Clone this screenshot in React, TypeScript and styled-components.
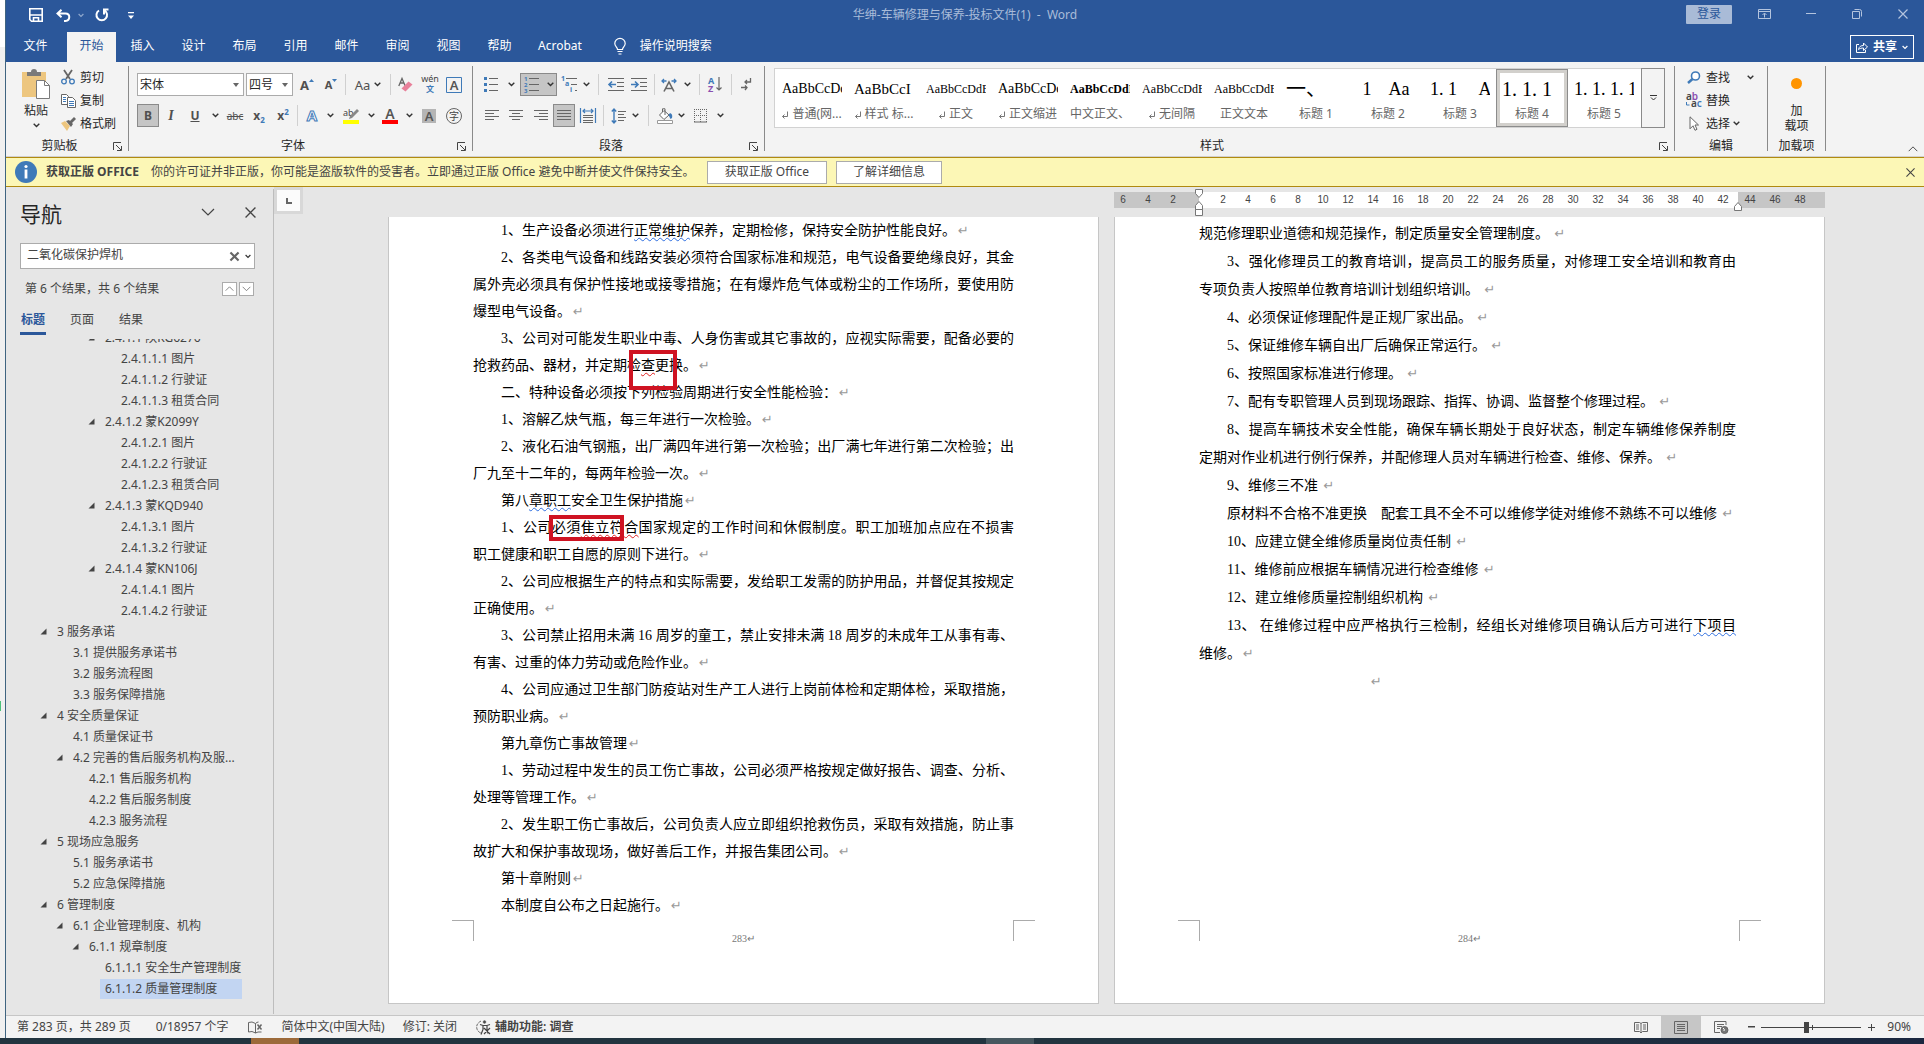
import React from "react";
import styled, { createGlobalStyle, css } from "styled-components";

const UI = `"Noto Sans", "Noto Sans CJK SC", sans-serif`;
const SERIF = `"Liberation Serif", "Noto Sans CJK SC", serif`;
const BLUE = "#2b579a";
const ACCENT = "#3f7ab8";

const Global = createGlobalStyle`
  * { box-sizing: border-box; }
  body { margin: 0; background: #f0f0f0; font-family: ${UI}; font-size: 12px; line-height: 16px; color: #262626; }
  button, input, select { font: inherit; color: inherit; margin: 0; padding: 0; border: 0; background: none; border-radius: 0; }
  svg { display: block; flex: none; overflow: visible; }
`;

/* ---------- frame ---------- */
const Desktop = styled.div`
  height: 100vh;
  display: flex;
  flex-direction: column;
`;
const Screen = styled.div`
  flex: 1;
  min-height: 0;
  display: flex;
`;
const Behind = styled.div`
  width: 5px;
  background: linear-gradient(#fff 0 47px, #f0f0f0 47px);
`;
const Spot = styled.div`
  width: 1px;
  height: 10px;
  margin-top: 701px;
  background: #4cc27a;
`;
const Win = styled.div`
  flex: 1;
  min-width: 0;
  display: flex;
  flex-direction: column;
  border-left: 1px solid #3f6480;
  background: #e6e6e6;
`;
const Taskbar = styled.div`
  height: 6px;
  display: flex;
  padding-left: 251px;
  background: linear-gradient(90deg, #22343f, #22343f 70%, #1b2740);
`;
const Segment = styled.div<{ $c: string }>`
  width: 48px;
  margin-right: 687px;
  background: ${(p) => p.$c};
`;

/* ---------- title bar ---------- */
const TitleBar = styled.header`
  height: 32px;
  display: grid;
  grid-template-columns: 1fr auto 1fr;
  background: ${BLUE};
  color: #fff;
`;
const Quick = styled.div`
  display: flex;
  align-items: center;
  padding: 0 0 2px 16px;
`;
const Title = styled.div`
  line-height: 30px;
  color: #a9bcd9;
  white-space: pre;
`;
const Caption = styled.div`
  display: flex;
  justify-content: flex-end;
  align-items: center;
  padding-bottom: 4px;
  color: #b4c4de;
`;
const SignIn = styled.button`
  width: 46px;
  height: 19px;
  margin-right: 6px;
  background: #a9bbd7;
  color: ${BLUE};
  border-radius: 1px;
`;
const Cell = styled.button<{ $w: number }>`
  width: ${(p) => p.$w}px;
  height: 22px;
  flex: none;
  display: flex;
  align-items: center;
  justify-content: center;
`;

/* ---------- tabs ---------- */
const TabBar = styled.nav`
  height: 30px;
  display: flex;
  gap: 2px;
  padding-left: 5px;
  background: ${BLUE};
  color: #fff;
`;
const Tab = styled.button<{ $on?: boolean; $first?: boolean }>`
  height: 30px;
  min-width: 49px;
  padding: 0 12px 2px;
  margin-right: ${(p) => (p.$first ? 5 : 0)}px;
  ${(p) => p.$on && css`background: #f3f3f3; color: ${BLUE};`}
`;
const Tell = styled.button`
  display: flex;
  align-items: center;
  gap: 14px;
  padding: 0 14px 2px 18px;
`;
const Share = styled.button`
  display: flex;
  align-items: center;
  justify-content: center;
  gap: 5px;
  width: 64px;
  height: 24px;
  margin: 3px 10px 0 auto;
  border: 1px solid #fff;
  font-weight: 700;
`;

/* ---------- ribbon ---------- */
const Ribbon = styled.div`
  height: 95px;
  display: flex;
  background: #f3f3f3;
  border-bottom: 1px solid #d2d0ce;
`;
const Group = styled.section<{ $w?: number }>`
  ${(p) => (p.$w ? `width: ${p.$w}px; flex: none;` : `flex: 1; min-width: 0;`)}
  display: flex;
  flex-direction: column;
  margin: 4px 0 5px;
  border-right: 1px solid #8a8a8a;
`;
const GroupBody = styled.div`
  flex: 1;
  min-height: 0;
  display: flex;
`;
const GroupFoot = styled.div`
  height: 18px;
  display: flex;
  align-items: center;
  margin-bottom: -4px;
`;
const GroupName = styled.span`
  flex: 1;
  text-align: center;
`;
const Launcher = styled.button`
  width: 15px;
  height: 10px;
`;
const Paste = styled.button`
  width: 46px;
  margin-left: 7px;
  padding-top: 3px;
  display: flex;
  flex-direction: column;
  align-items: center;
  gap: 4px;
`;
const Stack = styled.div<{ $l?: number }>`
  display: flex;
  flex-direction: column;
  padding-left: ${(p) => p.$l || 0}px;
`;
const Small = styled.button`
  height: 23px;
  display: flex;
  align-items: center;
  gap: 3px;
  white-space: nowrap;
`;
const IconBox = styled.span<{ $w?: number }>`
  width: ${(p) => p.$w || 18}px;
  display: flex;
  justify-content: center;
`;
const Rows = styled.div<{ $l: number }>`
  display: flex;
  flex-direction: column;
  gap: 8px;
  padding: 7px 0 0 ${(p) => p.$l}px;
`;
const Row = styled.div`
  height: 23px;
  display: flex;
  align-items: center;
`;
const Tool = styled.button<{ $w: number; $on?: boolean; $gap?: number }>`
  width: ${(p) => p.$w}px;
  height: 23px;
  flex: none;
  display: flex;
  align-items: center;
  justify-content: center;
  gap: ${(p) => p.$gap || 0}px;
  color: #505050;
  ${(p) => p.$on && css`background: #c5c5c5; border: 1px solid #8a8a8a;`}
`;
const Bar = styled.span<{ $w: number }>`
  width: ${(p) => p.$w}px;
  height: 21px;
  flex: none;
  background: linear-gradient(#d0d0d0, #d0d0d0) center / 1px 100% no-repeat;
`;
const Combo = styled.label<{ $w: number }>`
  width: ${(p) => p.$w}px;
  height: 23px;
  display: flex;
  align-items: center;
  margin-right: 2px;
  padding-right: 4px;
  background: #fff;
  border: 1px solid #ababab;
  select {
    flex: 1;
    min-width: 0;
    appearance: none;
    padding-left: 2px;
  }
`;
const Glyph = styled.span<{ $s?: number; $b?: boolean; $i?: boolean; $u?: boolean; $x?: boolean }>`
  font-size: ${(p) => p.$s || 14}px;
  font-weight: ${(p) => (p.$b ? 700 : 400)};
  font-style: ${(p) => (p.$i ? "italic" : "normal")};
  font-family: ${(p) => (p.$i ? SERIF : UI)};
  text-decoration: ${(p) => (p.$u ? "underline" : p.$x ? "line-through" : "none")};
  line-height: 20px;
  sub, sup { font-size: 8px; line-height: 0; color: ${ACCENT}; }
`;

/* ---------- style gallery ---------- */
const Gallery = styled.div`
  flex: 1;
  min-width: 0;
  height: 60px;
  display: flex;
  justify-content: space-between;
  margin: 2px 9px 0;
  background: #fff;
  border: 1px solid #d2d2d2;
`;
const StyleList = styled.div`
  display: flex;
  min-width: 0;
  overflow: hidden;
  padding: 0 1px;
`;
const StyleItem = styled.button<{ $on?: boolean }>`
  width: 72px;
  height: 58px;
  flex: none;
  padding: 0 6px;
  display: flex;
  flex-direction: column;
  ${(p) => p.$on && css`box-shadow: inset 0 0 0 1px #8c8c8c, inset 0 0 0 4px #d2d0cc;`}
`;
const Preview = styled.span<{ $s: number; $b?: boolean }>`
  width: 100%;
  height: 38px;
  overflow: hidden;
  white-space: pre;
  text-align: left;
  font: ${(p) => (p.$b ? 700 : 400)} ${(p) => p.$s}px/40px ${SERIF};
  color: #000;
`;
const StyleName = styled.span`
  width: 100%;
  line-height: 14px;
  color: #666;
  white-space: nowrap;
  display: flex;
  justify-content: center;
  align-items: center;
  gap: 4px;
`;
const More = styled.button`
  width: 24px;
  flex: none;
  display: flex;
  align-items: center;
  justify-content: center;
  margin: -1px;
  border: 1px solid #8a8a8a;
  background: #f3f3f3;
`;
const AddIn = styled.button`
  width: 100%;
  display: flex;
  flex-direction: column;
  align-items: center;
  padding-top: 12px;
  line-height: 15px;
`;
const Dot = styled.span`
  width: 11px;
  height: 11px;
  margin-bottom: 14px;
  border-radius: 50%;
  background: #ff9400;
`;
const RibbonEnd = styled.div`
  width: 98px;
  display: flex;
  align-items: flex-end;
  justify-content: flex-end;
`;
const Collapse = styled.button`
  width: 22px;
  padding: 0 0 4px;
  display: flex;
  justify-content: center;
`;

/* ---------- message bar ---------- */
const Message = styled.div`
  height: 30px;
  display: flex;
  align-items: center;
  padding-left: 9px;
  background: #fcf7b6;
  border: solid #b08a10;
  border-width: 1px 0;
  color: #444;
  white-space: nowrap;
`;
const MsgTitle = styled.strong`
  margin: 0 12px 0 9px;
`;
const MsgButton = styled.button<{ $w: number }>`
  width: ${(p) => p.$w}px;
  height: 23px;
  margin-right: 9px;
  background: #fff;
  border: 1px solid #ababab;
`;
const MsgText = styled.span`
  width: 556px;
`;

/* ---------- navigation pane ---------- */
const Main = styled.div`
  flex: 1;
  min-height: 0;
  display: flex;
`;
const Pane = styled.aside`
  width: 268px;
  flex: none;
  display: flex;
  flex-direction: column;
  margin: 2px 0 1px;
  border-right: 1px solid #bdbdbd;
  color: #444;
`;
const PaneHead = styled.div`
  height: 54px;
  display: flex;
  align-items: center;
  padding: 0 2px 8px 14px;
`;
const PaneTitle = styled.h2`
  flex: 1;
  margin: 0;
  padding-top: 4px;
  font-size: 21px;
  line-height: 28px;
  font-weight: 400;
  color: #262626;
`;
const Search = styled.label`
  height: 26px;
  margin: 0 18px 0 14px;
  display: flex;
  align-items: center;
  background: #fff;
  border: 1px solid #ababab;
  input {
    flex: 1;
    min-width: 0;
    padding: 0 0 2px 6px;
    outline: 0;
  }
`;
const Found = styled.div`
  height: 40px;
  display: flex;
  align-items: center;
  gap: 2px;
  padding: 0 19px 0 19px;
  span { flex: 1; }
`;
const Step = styled.button`
  width: 15px;
  height: 14px;
  display: flex;
  align-items: center;
  justify-content: center;
  background: #fff;
  border: 1px solid #ababab;
`;
const PaneTabs = styled.div`
  height: 26px;
  display: flex;
  gap: 23px;
  padding-left: 14px;
`;
const PaneTab = styled.button<{ $on?: boolean }>`
  width: 26px;
  height: 26px;
  padding-bottom: 5px;
  ${(p) => p.$on && css`color: ${BLUE}; font-weight: 700; border-bottom: 3px solid ${BLUE}; padding-bottom: 2px;`}
`;
const TreeBox = styled.div`
  flex: 1;
  min-height: 0;
  overflow: hidden;
  display: flex;
  flex-direction: column;
  justify-content: flex-end;
  margin-top: 4px;
  padding-bottom: 15px;
`;
const Tree = styled.ul`
  margin: 0;
  padding: 0 31px 0 0;
  list-style: none;
`;
const Node = styled.li<{ $level: number }>`
  height: 21px;
  display: flex;
  align-items: center;
  padding-left: ${(p) => p.$level * 16 + 18}px;
`;
const Fold = styled.span`
  width: 12px;
  flex: none;
`;
const NodeLink = styled.a<{ $on?: boolean }>`
  flex: 1;
  height: 20px;
  line-height: 20px;
  padding-left: 5px;
  color: #444;
  text-decoration: none;
  white-space: nowrap;
  ${(p) => p.$on && css`background: #c2d5f2;`}
`;

/* ---------- document ---------- */
const Canvas = styled.main`
  flex: 1;
  min-width: 0;
  display: flex;
  flex-direction: column;
`;
const RulerRow = styled.div`
  height: 30px;
  display: flex;
`;
const TabStop = styled.button`
  width: 29px;
  height: 27px;
  display: flex;
  align-items: center;
  justify-content: center;
  background: #fbfbfb;
  border: 3px solid #d8d8d8;
`;
const RulerSlot = styled.div`
  flex: 1;
  display: flex;
  justify-content: center;
  gap: 15px;
  padding: 5px 15px 0 0;
`;
const Blank = styled.div`
  width: 711px;
`;
const Ruler = styled.div`
  width: 711px;
  height: 16px;
  display: flex;
  font: 10px/16px "Liberation Sans", sans-serif;
  color: #444;
`;
const RulerPart = styled.div<{ $w?: number; $end?: boolean; $pad?: number }>`
  ${(p) => (p.$w ? `width: ${p.$w}px;` : "flex: 1;")}
  position: relative;
  display: flex;
  justify-content: ${(p) => (p.$end ? "flex-end" : "flex-start")};
  padding: ${(p) => (p.$end ? `0 ${p.$pad}px 0 0` : `0 0 0 ${p.$pad || 0}px`)};
  background: ${(p) => (p.$w ? "#c6c6c6" : "#fff")};
`;
const Tick = styled.span`
  width: 25px;
  flex: none;
  text-align: center;
`;
const Marker = styled.svg`
  position: absolute;
  left: -8px;
  top: -3px;
`;
const Sheets = styled.div`
  flex: 1;
  min-height: 0;
  display: flex;
  justify-content: center;
  gap: 15px;
  padding: 0 0 11px 15px;
`;
const Sheet = styled.article<{ $two?: boolean }>`
  width: 711px;
  display: flex;
  flex-direction: column;
  padding: ${(p) => (p.$two ? "3px 84px 0" : "0 84px")};
  background: #fff;
  border: 1px solid #c6c6c6;
  border-top: 0;
  font: 14px/27px ${SERIF};
  color: #000;
  ${(p) => p.$two && css`line-height: 28px;`}
`;
const Text = styled.div<{ $r?: number }>`
  flex: 1;
  padding-right: ${(p) => p.$r || 0}px;
`;
const Line = styled.p<{ $in?: boolean; $full?: boolean }>`
  margin: 0;
  padding-left: ${(p) => (p.$in ? 28 : 0)}px;
  white-space: ${(p) => (p.$full ? "nowrap" : "pre")};
  text-align: ${(p) => (p.$full ? "justify" : "left")};
  text-align-last: ${(p) => (p.$full ? "justify" : "left")};
`;
const Centered = styled(Line)`
  padding-left: 170px;
`;
const Ret = styled.span`
  margin-left: 2px;
  font: 13px/14px "DejaVu Sans", sans-serif;
  color: #999;
`;
const Wave = styled.span<{ $c: string }>`
  text-decoration: underline wavy ${(p) => p.$c} 1px;
  text-underline-offset: 2px;
  text-decoration-skip-ink: none;
`;
const Marked = styled.span`
  position: relative;
`;
const RedBox = styled.i<{ $tall?: boolean }>`
  position: absolute;
  border: 4px solid #cf1322;
  ${(p) => p.$tall
    ? css`left: -12px; right: -8px; top: -8px; height: 40px;`
    : css`left: -3px; right: 0; top: -5px; height: 26px;`}
`;
const Foot = styled.footer`
  display: flex;
  justify-content: space-between;
  height: 83px;
  margin: 0 -21px;
  font-size: 10px;
  line-height: 38px;
  color: #777;
`;
const Corner = styled.span<{ $right?: boolean }>`
  width: 22px;
  height: 21px;
  border: solid #ababab;
  border-width: ${(p) => (p.$right ? "1px 0 0 1px" : "1px 1px 0 0")};
`;

/* ---------- status bar ---------- */
const Status = styled.footer`
  height: 23px;
  display: flex;
  align-items: center;
  padding: 0 13px 0 11px;
  background: #f3f3f3;
  border-top: 1px solid #c6c6c6;
  color: #444;
  white-space: nowrap;
`;
const StatusItem = styled.button<{ $ml?: number; $b?: boolean }>`
  display: flex;
  align-items: center;
  gap: 3px;
  margin-left: ${(p) => p.$ml || 0}px;
  font-weight: ${(p) => (p.$b ? 600 : 400)};
  white-space: nowrap;
`;
const Push = styled.span`
  flex: 1;
`;
const View = styled.button<{ $on?: boolean }>`
  width: 40px;
  height: 22px;
  display: flex;
  align-items: center;
  justify-content: center;
  background: ${(p) => (p.$on ? "#c6c6c6" : "none")};
`;
const Zoom = styled.input`
  appearance: none;
  width: 100px;
  height: 14px;
  background: linear-gradient(#444, #444) center / 100% 1px no-repeat,
    linear-gradient(#444, #444) 51px center / 1px 5px no-repeat;
  &::-webkit-slider-thumb {
    appearance: none;
    width: 5px;
    height: 11px;
    background: #444;
  }
`;

/* ---------- icons ---------- */
const Chev = ({ c = "#333", w = 7 }: { c?: string; w?: number }) => (
  <svg width={w} height="5" viewBox="0 0 7 5" fill="none" stroke={c} strokeWidth="1.4"><path d="M.7 .8 3.5 3.6 6.3 .8" /></svg>
);
const BigChev = ({ up, w = 14, c = "#444" }: { up?: boolean; w?: number; c?: string }) => (
  <svg width={w} height={w / 2 + 1} viewBox="0 0 14 8" fill="none" stroke={c} strokeWidth="1.2"><path d={up ? "M1 7 7 1l6 6" : "M1 1l6 6 6-6"} /></svg>
);
const Cross = ({ s = 10, c = "#444", b = 1.2 }: { s?: number; c?: string; b?: number }) => (
  <svg width={s} height={s} viewBox="0 0 10 10" stroke={c} strokeWidth={b}><path d="M.5 .5l9 9M9.5 .5l-9 9" /></svg>
);
const Arrow = () => (
  <svg width="6" height="4" viewBox="0 0 6 4" fill="#666"><path d="M0 0h6L3 4z" /></svg>
);
const I = ({ w = 16, h = 16, children }: { w?: number; h?: number; children: React.ReactNode }) => (
  <svg width={w} height={h} viewBox={`0 0 ${w} ${h}`} fill="none" stroke="#666" strokeWidth="1">{children}</svg>
);
const LaunchIcon = () => (
  <svg width="9" height="9" viewBox="0 0 9 9" fill="none" stroke="#444"><path d="M.5 8V.5H8M3 3l5 5M8.5 4v4.5H4" /></svg>
);
const Lines = ({ widths, align }: { widths: number[]; align: "l" | "c" | "r" }) => (
  <I w={14} h={11}>
    {widths.map((w, i) => {
      const x = align === "l" ? 0 : align === "c" ? (14 - w) / 2 : 14 - w;
      return <path key={i} d={`M${x} ${i * 3 + 0.5}h${w}`} />;
    })}
  </I>
);
const Indent = ({ out }: { out?: boolean }) => (
  <I w={17} h={14}>
    <path d="M0 .5h16M9 4.5h7M9 8.5h7M0 12.5h16" />
    <path stroke={ACCENT} strokeWidth="1.6" d={out ? "M1 6.5h7M4 3.5l-3 3 3 3" : "M0 6.5h7M4 3.5l3 3-3 3"} />
  </I>
);

const GroupLabel = ({ name, launch }: { name: string; launch?: boolean }) => (
  <GroupFoot>
    <GroupName>{name}</GroupName>
    {launch && <Launcher aria-label={name + "设置"}><LaunchIcon /></Launcher>}
  </GroupFoot>
);

/* ---------- data ---------- */
const tabs = ["文件", "开始", "插入", "设计", "布局", "引用", "邮件", "审阅", "视图", "帮助", "Acrobat"];

type StyleDef = { p: string; n: string; s: number; m?: boolean; b?: boolean };
const styleDefs: StyleDef[] = [
  { p: "AaBbCcDdE", n: "普通(网...", s: 14, m: true },
  { p: "AaBbCcI", n: "样式 标...", s: 15, m: true },
  { p: "AaBbCcDdE", n: "正文", s: 12, m: true },
  { p: "AaBbCcDdE", n: "正文缩进", s: 14, m: true },
  { p: "AaBbCcDdE", n: "中文正文、", s: 12, b: true },
  { p: "AaBbCcDdE", n: "无间隔", s: 12, m: true },
  { p: "AaBbCcDdE", n: "正文文本", s: 12 },
  { p: "一、", n: "标题 1", s: 20 },
  { p: " 1    Aa", n: "标题 2", s: 18 },
  { p: "1. 1     Aa", n: "标题 3", s: 18 },
  { p: "1. 1. 1", n: "标题 4", s: 20 },
  { p: "1. 1. 1. 1", n: "标题 5", s: 18 },
];

type Item = [level: number, text: string, open?: boolean];
const outline: Item[] = [
  [4, "2.4.1.1 陕KG6276", true],
  [5, "2.4.1.1.1 图片"],
  [5, "2.4.1.1.2 行驶证"],
  [5, "2.4.1.1.3 租赁合同"],
  [4, "2.4.1.2 蒙K2099Y", true],
  [5, "2.4.1.2.1 图片"],
  [5, "2.4.1.2.2 行驶证"],
  [5, "2.4.1.2.3 租赁合同"],
  [4, "2.4.1.3 蒙KQD940", true],
  [5, "2.4.1.3.1 图片"],
  [5, "2.4.1.3.2 行驶证"],
  [4, "2.4.1.4 蒙KN106J", true],
  [5, "2.4.1.4.1 图片"],
  [5, "2.4.1.4.2 行驶证"],
  [1, "3 服务承诺", true],
  [2, "3.1 提供服务承诺书"],
  [2, "3.2 服务流程图"],
  [2, "3.3 服务保障措施"],
  [1, "4 安全质量保证", true],
  [2, "4.1 质量保证书"],
  [2, "4.2 完善的售后服务机构及服...", true],
  [3, "4.2.1 售后服务机构"],
  [3, "4.2.2 售后服务制度"],
  [3, "4.2.3 服务流程"],
  [1, "5 现场应急服务", true],
  [2, "5.1 服务承诺书"],
  [2, "5.2 应急保障措施"],
  [1, "6 管理制度", true],
  [2, "6.1 企业管理制度、机构", true],
  [3, "6.1.1 规章制度", true],
  [4, "6.1.1.1 安全生产管理制度"],
  [4, "6.1.1.2 质量管理制度"],
];

const WAVE_BLUE = "#2f6fe0";
const WAVE_RED = "#e02020";

/* One laid-out line: i = first-line indent, f = fills the measure, e = ends the paragraph. */
type L = { t: React.ReactNode; i?: boolean; f?: boolean; e?: boolean };
const page1: L[] = [
  { i: true, e: true, t: <>1、生产设备必须进行<Wave $c={WAVE_BLUE}>正常维护</Wave>保养，定期检修，保持安全防护性能良好。</> },
  { i: true, f: true, t: "2、各类电气设备和线路安装必须符合国家标准和规范，电气设备要绝缘良好，其金" },
  { f: true, t: "属外壳必须具有保护性接地或接零措施；在有爆炸危气体或粉尘的工作场所，要使用防" },
  { e: true, t: "爆型电气设备。" },
  { i: true, f: true, t: "3、公司对可能发生职业中毒、人身伤害或其它事故的，应视实际需要，配备必要的" },
  { e: true, t: <>抢救药品、器材，并定期检<Marked><Wave $c={WAVE_RED}>查</Wave>更<RedBox $tall /></Marked>换。</> },
  { i: true, e: true, t: "二、特种设备必须按下列检验周期进行安全性能检验：" },
  { i: true, e: true, t: "1、溶解乙炔气瓶，每三年进行一次检验。" },
  { i: true, f: true, t: "2、液化石油气钢瓶，出厂满四年进行第一次检验；出厂满七年进行第二次检验；出" },
  { e: true, t: "厂九至十二年的，每两年检验一次。" },
  { i: true, e: true, t: <>第八<Wave $c={WAVE_BLUE}>章职工</Wave>安全卫生保护措施</> },
  { i: true, f: true, t: <>1、公司<Marked>必須<Wave $c={WAVE_RED}>隹立符</Wave><RedBox /></Marked><Wave $c={WAVE_RED}>合</Wave>国家规定的工作时间和休假制度。职工加班加点应在不损害</> },
  { e: true, t: "职工健康和职工自愿的原则下进行。" },
  { i: true, f: true, t: "2、公司应根据生产的特点和实际需要，发给职工发需的防护用品，并督促其按规定" },
  { e: true, t: "正确使用。" },
  { i: true, f: true, t: "3、公司禁止招用未满 16 周岁的童工，禁止安排未满 18 周岁的未成年工从事有毒、" },
  { e: true, t: "有害、过重的体力劳动或危险作业。" },
  { i: true, f: true, t: "4、公司应通过卫生部门防疫站对生产工人进行上岗前体检和定期体检，采取措施，" },
  { e: true, t: "预防职业病。" },
  { i: true, e: true, t: "第九章伤亡事故管理" },
  { i: true, f: true, t: "1、劳动过程中发生的员工伤亡事故，公司必须严格按规定做好报告、调查、分析、" },
  { e: true, t: "处理等管理工作。" },
  { i: true, f: true, t: "2、发生职工伤亡事故后，公司负责人应立即组织抢救伤员，采取有效措施，防止事" },
  { e: true, t: "故扩大和保护事故现场，做好善后工作，并报告集团公司。" },
  { i: true, e: true, t: "第十章附则" },
  { i: true, e: true, t: "本制度自公布之日起施行。" },
];
const page2: L[] = [
  { e: true, t: "规范修理职业道德和规范操作，制定质量安全管理制度。 " },
  { i: true, f: true, t: "3、强化修理员工的教育培训，提高员工的服务质量，对修理工安全培训和教育由" },
  { e: true, t: "专项负责人按照单位教育培训计划组织培训。 " },
  { i: true, e: true, t: "4、必须保证修理配件是正规厂家出品。 " },
  { i: true, e: true, t: "5、保证维修车辆自出厂后确保正常运行。 " },
  { i: true, e: true, t: "6、按照国家标准进行修理。 " },
  { i: true, e: true, t: "7、配有专职管理人员到现场跟踪、指挥、协调、监督整个修理过程。 " },
  { i: true, f: true, t: "8、提高车辆技术安全性能，确保车辆长期处于良好状态，制定车辆维修保养制度" },
  { e: true, t: "定期对作业机进行例行保养，并配修理人员对车辆进行检查、维修、保养。 " },
  { i: true, e: true, t: "9、维修三不准 " },
  { i: true, e: true, t: "原材料不合格不准更换　配套工具不全不可以维修学徒对维修不熟练不可以维修 " },
  { i: true, e: true, t: "10、应建立健全维修质量岗位责任制 " },
  { i: true, e: true, t: "11、维修前应根据车辆情况进行检查维修 " },
  { i: true, e: true, t: "12、建立维修质量控制组织机构 " },
  { i: true, f: true, t: <>13、 在维修过程中应严格执行三检制，经组长对维修项目确认后方可进行<Wave $c={WAVE_BLUE}>下项目</Wave></> },
  { e: true, t: "维修。" },
];
const renderLines = (ls: L[]) =>
  ls.map((l, n) => (
    <Line key={n} $in={l.i} $full={l.f}>
      {l.t}
      {l.e && <Ret>↵</Ret>}
    </Line>
  ));

const evens = (a: number, b: number) => Array.from({ length: (b - a) / 2 + 1 }, (_, i) => a + i * 2);

export default function App() {
  return (
    <Desktop lang="zh-CN">
      <Global />
      <Screen>
        <Behind><Spot /></Behind>
        <Win>
          <TitleBar>
            <Quick>
              <Cell $w={28} aria-label="保存">
                <svg width="14" height="14" viewBox="0 0 14 14" fill="none" stroke="#fff" strokeWidth="1.6"><path d="M.8 .8h12.4v12.4H2.5L.8 11.5zM1 7h12M4.500 13V9.800h5V13" /></svg>
              </Cell>
              <Cell $w={26} aria-label="撤消">
                <svg width="15" height="13" viewBox="0 0 15 13" fill="none" stroke="#fff" strokeWidth="2"><path d="M5.500 .8 1.500 4.500l4 3.700M2 4.500h7.500c5 0 5 7 0 7.500H8" /></svg>
              </Cell>
              <Cell $w={10} aria-label="撤消列表"><Chev c="#8fa8cd" w={6} /></Cell>
              <Cell $w={32} aria-label="恢复">
                <svg width="14" height="14" viewBox="0 0 14 14" fill="none" stroke="#fff" strokeWidth="2"><path d="M9.500 2.500A5.300 5.300 0 1 1 4 2.500M9 6.500V1.500h4.500" /></svg>
              </Cell>
              <Cell $w={26} aria-label="自定义快速访问工具栏">
                <svg width="6" height="7" viewBox="0 0 6 7" fill="#fff"><path d="M0 0h6v1.300H0zM0 3.500h6L3 7z" /></svg>
              </Cell>
            </Quick>
            <Title>{"华绅-车辆修理与保养-投标文件(1)  -  Word"}</Title>
            <Caption>
              <SignIn>登录</SignIn>
              <Cell $w={52} aria-label="功能区显示选项">
                <svg width="13" height="10" viewBox="0 0 13 10" fill="none" stroke="#b4c4de"><path d="M.5 .5h12v9H.5zM.5 2.500h12M6.500 8.500v-4M4.500 6l2-2 2 2" /></svg>
              </Cell>
              <Cell $w={42} aria-label="最小化"><svg width="10" height="2" viewBox="0 0 10 2" stroke="#b4c4de"><path d="M0 .5h10" /></svg></Cell>
              <Cell $w={50} aria-label="还原">
                <svg width="10" height="10" viewBox="0 0 10 10" fill="none" stroke="#b4c4de"><path d="M.5 2.500h7v7h-7zM2.500 .5h5q2 0 2 2v5" /></svg>
              </Cell>
              <Cell $w={42} aria-label="关闭"><Cross c="#b4c4de" /></Cell>
            </Caption>
          </TitleBar>

          <TabBar>
            {tabs.map((t, i) => <Tab key={t} $first={i === 0} $on={i === 1}>{t}</Tab>)}
            <Tell>
              <svg width="12" height="17" viewBox="0 0 12 17" fill="none" stroke="#fff" strokeWidth="1.200"><path d="M3.500 11.500C3.500 9 .8 8.500 .8 5.500a5.200 5.200 0 0 1 10.400 0c0 3-2.700 3.500-2.700 6zM3.500 13.500h5M4.500 16h3" /></svg>
              操作说明搜索
            </Tell>
            <Share>
              <svg width="12" height="12" viewBox="0 0 12 12" fill="none" stroke="#fff"><path d="M3 3.500H.5v8h9V9M2.500 8.500C3 5.500 5 4.500 7.500 4.500V2l4 4-4 3.500V7C5.500 7 4 7.300 2.500 8.500z" /></svg>
              共享
              <Chev c="#fff" w={6} />
            </Share>
          </TabBar>

          <Ribbon>
            <Group $w={123}>
              <GroupBody>
                <Paste>
                  <svg width="30" height="30" viewBox="0 0 30 30"><path d="M1 3h24v25H1z" fill="#edc67f" /><path d="M6 7V3h4a3 3 0 0 1 6 0h4v4z" fill="#7a7a7a" /><path d="M15.500 11.500h8l5 5v13h-13z" fill="#fff" stroke="#7a7a7a" /><path d="M23.500 11.500v5h5" fill="none" stroke="#7a7a7a" /></svg>
                  粘贴
                  <Chev />
                </Paste>
                <Stack>
                  <Small>
                    <IconBox><I w={14} h={15}><path d="M3 0l6 9M11 0L5 9" strokeWidth="1.800" /><circle cx="3" cy="11.500" r="2.300" stroke={ACCENT} strokeWidth="1.300" /><circle cx="11" cy="11.500" r="2.300" stroke={ACCENT} strokeWidth="1.300" /></I></IconBox>
                    剪切
                  </Small>
                  <Small>
                    <IconBox><I w={15} h={14}><path d="M.5 .5h5l2 2v8h-7z" fill="#fff" /><path d="M6.500 3.500h5l3 3v7h-8z" fill="#fff" /><path d="M2 3.500h3M2 5.500h3M2 7.500h3M8 7.500h5M8 9.500h5M8 11.500h5" stroke={ACCENT} /></I></IconBox>
                    复制
                  </Small>
                  <Small>
                    <IconBox><I w={15} h={14}><path d="M0 6l4-2 5 5-3 5z" fill="#edc67f" stroke="none" /><path d="M5 4l3-1 4 4-2 3zM9 4l4-4 2 2-4 4z" fill="#666" stroke="none" /></I></IconBox>
                    格式刷
                  </Small>
                </Stack>
              </GroupBody>
              <GroupLabel name="剪贴板" launch />
            </Group>

            <Group $w={344}>
              <GroupBody>
                <Rows $l={8}>
                  <Row>
                    <Combo $w={107}><select aria-label="字体"><option>宋体</option></select><Arrow /></Combo>
                    <Combo $w={47}><select aria-label="字号"><option>四号</option></select><Arrow /></Combo>
                    <Tool $w={24} aria-label="增大字号"><Glyph $s={13} $b>A</Glyph><svg width="5" height="12" viewBox="0 0 5 12"><path d="M0 3l2.500-3L5 3z" fill={ACCENT} /></svg></Tool>
                    <Tool $w={24} aria-label="减小字号"><Glyph $s={11} $b>A</Glyph><svg width="5" height="12" viewBox="0 0 5 12"><path d="M0 0h5L2.500 3z" fill={ACCENT} /></svg></Tool>
                    <Bar $w={5} />
                    <Tool $w={40} $gap={4} aria-label="更改大小写"><Glyph $s={13}>Aa</Glyph><Chev /></Tool>
                    <Bar $w={5} />
                    <Tool $w={25} aria-label="清除格式">
                      <I w={16} h={16}><path d="M.8 9 4 1.500 7.200 9M2 6h4" strokeWidth="1.300" /><path d="M3.500 11.500l7-7L14.500 7.500l-7 7z" fill="#e8809a" stroke="none" /></I>
                    </Tool>
                    <Tool $w={24} aria-label="拼音指南"><svg width="18" height="18" viewBox="0 0 18 18"><text x="9" y="6" fontSize="9" textAnchor="middle" fill="#444">wén</text><text x="9" y="16" fontSize="8" textAnchor="middle" fontWeight="700" fill={ACCENT}>文</text></svg></Tool>
                    <Tool $w={24} aria-label="字符边框"><svg width="16" height="16" viewBox="0 0 16 16"><path d="M.5 .5h15v15H.5z" fill="none" stroke={ACCENT} /><text x="8" y="13" fontSize="13" textAnchor="middle" fontWeight="600" fill="#555">A</text></svg></Tool>
                  </Row>
                  <Row>
                    <Tool $w={22} $on aria-label="加粗"><Glyph $s={12} $b>B</Glyph></Tool>
                    <Tool $w={24} aria-label="倾斜"><Glyph $s={14} $i $b>I</Glyph></Tool>
                    <Tool $w={24} aria-label="下划线"><Glyph $s={12} $b $u>U</Glyph></Tool>
                    <Tool $w={16} aria-label="下划线样式"><Chev /></Tool>
                    <Tool $w={24} aria-label="删除线"><Glyph $s={10} $x>abc</Glyph></Tool>
                    <Tool $w={24} aria-label="下标"><Glyph $s={12} $b>x<sub>2</sub></Glyph></Tool>
                    <Tool $w={24} aria-label="上标"><Glyph $s={12} $b>x<sup>2</sup></Glyph></Tool>
                    <Bar $w={5} />
                    <Tool $w={23} aria-label="文本效果"><svg width="16" height="16" viewBox="0 0 16 16"><text x="8" y="13" fontSize="15" fontWeight="700" textAnchor="middle" fill="#fff" stroke={ACCENT} strokeWidth="1">A</text></svg></Tool>
                    <Tool $w={14} aria-label="文本效果选项"><Chev /></Tool>
                    <Tool $w={28} aria-label="突出显示">
                      <svg width="16" height="17" viewBox="0 0 16 17"><text x="0" y="9" fontSize="9" fill="#444">ab</text><path d="M7 9l7-7 2 2-7 7-3 1z" fill="#888" /><path d="M0 13h16v4H0z" fill="#ff0" /></svg>
                    </Tool>
                    <Tool $w={12} aria-label="突出显示颜色"><Chev /></Tool>
                    <Tool $w={26} aria-label="字体颜色">
                      <svg width="16" height="17" viewBox="0 0 16 17"><text x="8" y="12" fontSize="14" fontWeight="600" textAnchor="middle" fill="#555">A</text><path d="M0 13h16v4H0z" fill="#f00" /></svg>
                    </Tool>
                    <Tool $w={13} aria-label="字体颜色选项"><Chev /></Tool>
                    <Tool $w={26} aria-label="字符底纹"><svg width="14" height="14" viewBox="0 0 14 14"><path d="M0 0h14v14H0z" fill="#b5b5b5" /><text x="7" y="12" fontSize="13" fontWeight="600" textAnchor="middle" fill="#555">A</text></svg></Tool>
                    <Tool $w={24} aria-label="带圈字符"><svg width="16" height="16" viewBox="0 0 16 16"><circle cx="8" cy="8" r="7.500" fill="none" stroke="#666" /><text x="8" y="12" fontSize="10" textAnchor="middle" fill="#444">字</text></svg></Tool>
                  </Row>
                </Rows>
              </GroupBody>
              <GroupLabel name="字体" launch />
            </Group>

            <Group $w={292}>
              <GroupBody>
                <Rows $l={7}>
                  <Row>
                    <Tool $w={22} aria-label="项目符号"><I w={14} h={15}><path d="M5 1.500h9M5 7.500h9M5 13.500h9" /><path d="M0 0h3v3H0zM0 6h3v3H0zM0 12h3v3H0z" fill={ACCENT} stroke="none" /></I></Tool>
                    <Tool $w={18} aria-label="项目符号库"><Chev /></Tool>
                    <Tool $w={37} $on $gap={8} aria-label="编号">
                      <svg width="15" height="17" viewBox="0 0 15 17"><path d="M5 2.500h10M5 8.500h10M5 14.500h10" stroke="#666" /><text fontSize="6" fontWeight="700" fill={ACCENT}><tspan x="0" y="5">1</tspan><tspan x="0" y="11">2</tspan><tspan x="0" y="17">3</tspan></text></svg>
                      <Chev />
                    </Tool>
                    <Tool $w={24} aria-label="多级列表">
                      <svg width="17" height="17" viewBox="0 0 17 17"><path d="M5 2.500h11M10 8.500h6M14 14.500h2" stroke="#666" /><text fontSize="7" fontWeight="700" fill={ACCENT}><tspan x="0" y="5">1</tspan><tspan x="4" y="10">a</tspan><tspan x="9" y="16">i</tspan></text></svg>
                    </Tool>
                    <Tool $w={11} aria-label="多级列表库"><Chev /></Tool>
                    <Bar $w={13} />
                    <Tool $w={22} aria-label="减少缩进量"><Indent out /></Tool>
                    <Tool $w={24} aria-label="增加缩进量"><Indent /></Tool>
                    <Bar $w={6} />
                    <Tool $w={24} aria-label="中文版式">
                      <I w={16} h={14}><path d="M3 13.500 8 4l5 9.500M5 10.500h6" strokeWidth="1.600" /><path d="M5.500 3H1M3 1L1 3l2 2M10.500 3H15M13 1l2 2-2 2" stroke={ACCENT} strokeWidth="1.300" /></I>
                    </Tool>
                    <Tool $w={12} aria-label="中文版式选项"><Chev /></Tool>
                    <Bar $w={12} />
                    <Tool $w={20} aria-label="排序">
                      <svg width="14" height="17" viewBox="0 0 14 17"><text fontSize="9" fontWeight="700"><tspan x="0" y="8" fill={ACCENT}>A</tspan><tspan x="0" y="16" fill="#8a4fb0">Z</tspan></text><path d="M11 1v13M8.500 11.500 11 14l2.500-2.500" fill="none" stroke="#666" strokeWidth="1.200" /></svg>
                    </Tool>
                    <Bar $w={12} />
                    <Tool $w={18} aria-label="显示编辑标记"><I w={10} h={13}><path d="M9.500 0v4H4M6 2L4 4l2 2M0 9.500h6M4 7.500l2 2-2 2.500" strokeWidth="1.300" /></I></Tool>
                  </Row>
                  <Row>
                    <Tool $w={24} aria-label="左对齐"><Lines widths={[14, 9, 14, 9]} align="l" /></Tool>
                    <Tool $w={24} aria-label="居中"><Lines widths={[14, 8, 14, 8]} align="c" /></Tool>
                    <Tool $w={25} aria-label="右对齐"><Lines widths={[14, 9, 14, 9]} align="r" /></Tool>
                    <Tool $w={22} $on aria-label="两端对齐"><Lines widths={[14, 14, 14, 14]} align="l" /></Tool>
                    <Tool $w={26} aria-label="分散对齐"><I w={16} h={16}><path d="M.5 0v15M15.500 0v15M3 3h10M5 1L3 3l2 2M11 1l2 2-2 2" stroke={ACCENT} strokeWidth="1.200" /><path d="M3 7.500h10M3 9.500h10M3 12.500h10M3 14.500h10" /></I></Tool>
                    <Bar $w={5} />
                    <Tool $w={24} aria-label="行距"><I w={15} h={16}><path d="M3 1v14M.8 3.500 3 1l2.200 2.500M.8 12.500 3 15l2.200-2.500" stroke={ACCENT} strokeWidth="1.400" /><path d="M7 3.500h8M7 6.500h6M7 9.500h8M7 12.500h6" /></I></Tool>
                    <Tool $w={10} aria-label="行距选项"><Chev /></Tool>
                    <Bar $w={16} />
                    <Tool $w={18} aria-label="底纹"><I w={16} h={16}><path d="M2.500 7 7 2.500l5 4.500-5 4.500zM5.500 4V.8h2.500V7" fill="#fff" /><path d="M13 5q3 1 2 5l-1.500 1-2-4z" fill={ACCENT} stroke="none" /><path d="M.5 12.500h15v3H.5z" fill="#fff" stroke="#999" /></I></Tool>
                    <Tool $w={14} aria-label="底纹选项"><Chev /></Tool>
                    <Tool $w={26} aria-label="边框"><I w={14} h={14}><path d="M.5 0v13M6.500 0v13M12.500 0v13M0 .5h13M0 6.500h13" strokeDasharray="1 1" /><path d="M0 13h13" /></I></Tool>
                    <Tool $w={12} aria-label="边框选项"><Chev /></Tool>
                  </Row>
                </Rows>
              </GroupBody>
              <GroupLabel name="段落" launch />
            </Group>

            <Group>
              <GroupBody>
                <Gallery>
                  <StyleList>
                    {styleDefs.map((d) => (
                      <StyleItem key={d.n} $on={d.n === "标题 4"}>
                        <Preview $s={d.s} $b={d.b}>{d.p}</Preview>
                        <StyleName>
                          {d.m && <svg width="6" height="12" viewBox="0 0 6 12" fill="none" stroke="#777"><path d="M5.500 3.500v5h-5M2.500 6.500l-2 2 2 2" /></svg>}
                          {d.n}
                        </StyleName>
                      </StyleItem>
                    ))}
                  </StyleList>
                  <More aria-label="其他样式"><svg width="7" height="6" viewBox="0 0 7 6" fill="none" stroke="#333"><path d="M0 .5h7M1 2.500l2.500 2.500L6 2.500" /></svg></More>
                </Gallery>
              </GroupBody>
              <GroupLabel name="样式" launch />
            </Group>

            <Group $w={93}>
              <GroupBody>
                <Stack $l={10}>
                  <Small>
                    <IconBox><I w={14} h={13}><circle cx="8.500" cy="5" r="4" stroke={ACCENT} strokeWidth="1.600" fill="#fff" /><path d="M5.500 8 1 12" stroke={ACCENT} strokeWidth="2.400" /></I></IconBox>
                    查找
                    <IconBox $w={34}><Chev /></IconBox>
                  </Small>
                  <Small>
                    <IconBox><svg width="17" height="17" viewBox="0 0 17 17" fontSize="10" fontWeight="600"><text x="0" y="8" fill="#444">a<tspan fill="#8a4fb0">b</tspan></text><text x="5" y="15" fill="#444">a<tspan fill={ACCENT}>c</tspan></text><path d="M.5 10v3h3" fill="none" stroke={ACCENT} /></svg></IconBox>
                    替换
                  </Small>
                  <Small>
                    <IconBox><I w={10} h={15}><path d="M1 .8v12l3-3 2 4.500 2-1-2-4.300h3.500z" fill="#fff" /></I></IconBox>
                    选择
                    <Chev />
                  </Small>
                </Stack>
              </GroupBody>
              <GroupLabel name="编辑" />
            </Group>

            <Group $w={58}>
              <GroupBody>
                <AddIn><Dot />加<br />载项</AddIn>
              </GroupBody>
              <GroupLabel name="加载项" />
            </Group>
            <RibbonEnd>
              <Collapse aria-label="折叠功能区"><BigChev up w={10} c="#333" /></Collapse>
            </RibbonEnd>
          </Ribbon>

          <Message role="status">
            <svg width="22" height="22" viewBox="0 0 22 22"><circle cx="11" cy="11" r="11" fill={ACCENT} /><circle cx="11" cy="5.500" r="1.600" fill="#fff" /><path d="M9.600 8.500h2.800v9H9.600z" fill="#fff" /></svg>
            <MsgTitle>获取正版 OFFICE</MsgTitle>
            <MsgText>你的许可证并非正版，你可能是盗版软件的受害者。立即通过正版 Office 避免中断并使文件保持安全。</MsgText>
            <MsgButton $w={120}>获取正版 Office</MsgButton>
            <MsgButton $w={106}>了解详细信息</MsgButton>
            <Push />
            <Cell $w={28} aria-label="关闭消息"><Cross s={9} /></Cell>
          </Message>

          <Main>
            <Pane>
              <PaneHead>
                <PaneTitle>导航</PaneTitle>
                <Cell $w={42} aria-label="任务窗格选项"><BigChev /></Cell>
                <Cell $w={42} aria-label="关闭窗格"><Cross s={11} /></Cell>
              </PaneHead>
              <Search>
                <input aria-label="搜索文档" defaultValue="二氧化碳保护焊机" />
                <Cell $w={16} aria-label="清除搜索"><Cross s={9} b={2.4} c="#666" /></Cell>
                <Cell $w={12} aria-label="搜索选项"><Chev w={6} /></Cell>
              </Search>
              <Found>
                <span>第 6 个结果，共 6 个结果</span>
                <Step aria-label="上一个"><BigChev up w={9} c="#666" /></Step>
                <Step aria-label="下一个"><BigChev w={9} c="#666" /></Step>
              </Found>
              <PaneTabs>
                <PaneTab $on>标题</PaneTab>
                <PaneTab>页面</PaneTab>
                <PaneTab>结果</PaneTab>
              </PaneTabs>
              <TreeBox>
                <Tree>
                  {outline.map(([level, text, open], n) => (
                    <Node key={text} $level={level}>
                      <Fold>{open && <svg width="7" height="7" viewBox="0 0 7 7"><path d="M6.500 .5v6h-6z" fill="#444" /></svg>}</Fold>
                      <NodeLink href="#" $on={n === outline.length - 1}>{text}</NodeLink>
                    </Node>
                  ))}
                </Tree>
              </TreeBox>
            </Pane>

            <Canvas>
              <RulerRow>
                <TabStop aria-label="制表符"><svg width="6" height="6" viewBox="0 0 6 6"><path d="M1 0v5h5" fill="none" stroke="#666" strokeWidth="2" /></svg></TabStop>
                <RulerSlot>
                  <Blank />
                  <Ruler>
                    <RulerPart $w={85} $end $pad={13}>{[6, 4, 2].map((n) => <Tick key={n}>{n}</Tick>)}</RulerPart>
                    <RulerPart $pad={12}>
                      {evens(2, 42).map((n) => <Tick key={n}>{n}</Tick>)}
                      <Marker width="16" height="28" viewBox="0 0 16 28">
                        <path d="M4.500 .5h7v4L8 8.500 4.500 4.500zM4.500 20.500v-4L8 12.500l3.500 4v4zM4.500 20.500h7v6h-7z" fill="#fff" stroke="#777" />
                      </Marker>
                    </RulerPart>
                    <RulerPart $w={87}>
                      {evens(44, 48).map((n) => <Tick key={n}>{n}</Tick>)}
                      <Marker width="16" height="22" viewBox="0 0 16 22">
                        <path d="M4.500 21.500v-4L8 13.500l3.500 4v4z" fill="#fff" stroke="#777" />
                      </Marker>
                    </RulerPart>
                  </Ruler>
                </RulerSlot>
              </RulerRow>
              <Sheets>
                <Sheet>
                  <Text>{renderLines(page1)}</Text>
                  <Foot><Corner />283↵<Corner $right /></Foot>
                </Sheet>
                <Sheet $two>
                  <Text $r={4}>
                    {renderLines(page2)}
                    <Centered><Ret>↵</Ret></Centered>
                  </Text>
                  <Foot><Corner />284↵<Corner $right /></Foot>
                </Sheet>
              </Sheets>
            </Canvas>
          </Main>

          <Status>
            <StatusItem>第 283 页，共 289 页</StatusItem>
            <StatusItem $ml={25}>0/18957 个字</StatusItem>
            <StatusItem $ml={20} aria-label="校对"><I w={15} h={13}><path d="M7.500 2.500Q4 0 .5 1.500v9.500Q4 9.500 7.500 12zM7.500 2.500Q9 1 10.500 1M7.500 12q2-1.500 6-1" /><path d="M9.500 3.500l4 5M13.500 3.500l-4 5" strokeWidth="1.500" /></I></StatusItem>
            <StatusItem $ml={18}>简体中文(中国大陆)</StatusItem>
            <StatusItem $ml={18}>修订: 关闭</StatusItem>
            <StatusItem $ml={18} $b>
              <I w={17} h={15}><path d="M6 1Q.5 4 2 9q1 3 4 4" strokeDasharray="3 1" /><circle cx="9.500" cy="2" r="1.300" fill="#444" /><path d="M5 4.500l3 1h4l3-1M8 5.500v4l-2 5M12 5.500v4l1 4M9 8l6 6M15 8l-6 6" stroke="#444" strokeWidth="1.200" /></I>
              辅助功能: 调查
            </StatusItem>
            <Push />
            <View aria-label="阅读视图"><I w={14} h={13}><path d="M.5 1.500h5l1.500 1 1.500-1h5v9h-5L7 12l-1.500-1.500h-5zM7 2.500V12M2 4h3M2 6h3M2 8h3M9 4h3M9 6h3M9 8h3" /></I></View>
            <View $on aria-label="页面视图"><I w={14} h={13}><path d="M.5 .5h13v12H.5zM3 3.500h8M3 5.500h8M3 7.500h8M3 9.500h8" /></I></View>
            <View aria-label="Web 版式视图"><I w={15} h={13}><path d="M12 4V.5H.5v11H6M3 3.500h7M3 5.500h5M3 7.500h3" /><circle cx="10.500" cy="9" r="3.500" fill="#777" /><path d="M9 7q2 1 1 3" stroke="#fff" /></I></View>
            <Cell $w={20} aria-label="缩小"><svg width="7" height="2" viewBox="0 0 7 2"><path d="M0 0h7v1.500H0z" fill="#444" /></svg></Cell>
            <Zoom type="range" min={0} max={100} defaultValue={45} aria-label="缩放" />
            <Cell $w={20} aria-label="放大"><svg width="7" height="7" viewBox="0 0 7 7"><path d="M3 0h1v3h3v1H4v3H3V4H0V3h3z" fill="#444" /></svg></Cell>
            <StatusItem $ml={6}>90%</StatusItem>
          </Status>
        </Win>
      </Screen>
      <Taskbar>
        <Segment $c="#9c6a3a" />
        <Segment $c="#46575f" />
      </Taskbar>
    </Desktop>
  );
}
